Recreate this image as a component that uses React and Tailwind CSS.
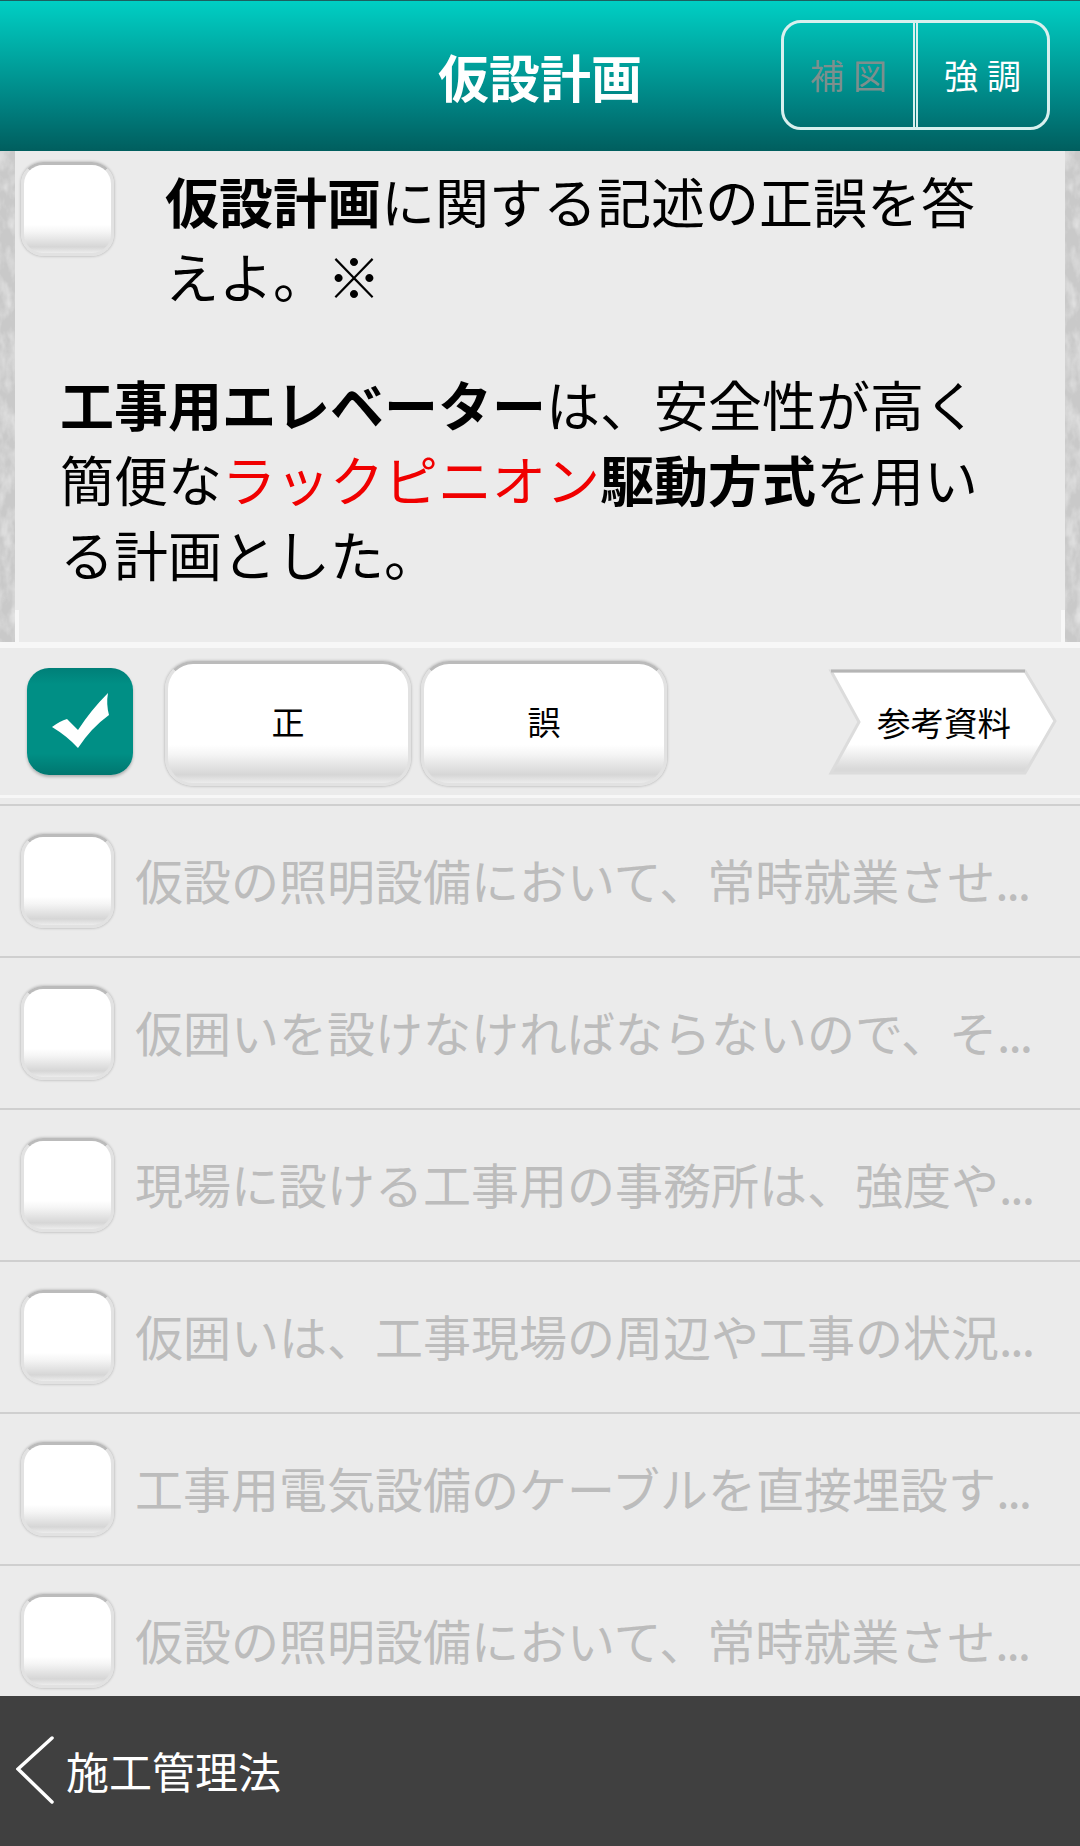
import React from 'react';

const rows = [
  '仮設の照明設備において、常時就業させ',
  '仮囲いを設けなければならないので、そ',
  '現場に設ける工事用の事務所は、強度や',
  '仮囲いは、工事現場の周辺や工事の状況',
  '工事用電気設備のケーブルを直接埋設す',
  '仮設の照明設備において、常時就業させ',
];

const raised = 'bg-[linear-gradient(#ffffff_0%,#ffffff_68%,#f5f5f5_76%,#d6d6d6_93%,#ececec_100%)] border-[3px] border-[#e2e2e2] border-t-[#bbbbbb] shadow-[0_0_3px_rgba(0,0,0,0.3)]';

const Checkbox = () => <div className={`w-[93px] h-[94px] shrink-0 rounded-[22px] ${raised}`} />;

// stone wall texture at the sides of the question
const Stone = ({ id }) => (
  <div className="w-[15px] shrink-0 bg-[#c9c9c9] overflow-hidden">
    <svg width="15" height="492" className="block">
      <filter id={id}>
        <feTurbulence type="fractalNoise" baseFrequency="0.09 0.05" numOctaves="3" seed="4" />
        <feColorMatrix values="0 0 0 0 1  0 0 0 0 1  0 0 0 0 1  1.6 0 0 0 -0.6" />
      </filter>
      <rect width="15" height="492" filter={`url(#${id})`} opacity="0.6" />
    </svg>
  </div>
);

export default function App() {
  return (
    <div className="w-[1080px] h-[1846px] flex flex-col overflow-hidden bg-[#ebebeb] text-black [font-family:'Noto_Sans_CJK_JP',sans-serif]">
      {/* header */}
      <header className="h-[151px] shrink-0 grid grid-cols-[1fr_auto_1fr] items-center border-t border-[#1d5f5f] bg-[linear-gradient(#00cfc4,#00a8a2_35%,#008080_70%,#005e5e)]">
        <div />
        <h1 className="text-[51px] leading-none font-bold text-white">仮設計画</h1>
        <div className="flex justify-end pr-[30px] pb-[3px]">
          <div className="flex w-[269px] h-[110px] rounded-[20px] border-[3px] border-[#d8f0ee] text-[34px] leading-none">
            <div className="w-[129px] flex items-center justify-center tracking-[9px] pl-[9px] text-[#7d8f8d]">補図</div>
            <div className="w-[5px] border-x-2 border-[#d8f0ee]" />
            <div className="flex-1 flex items-center justify-center tracking-[9px] pl-[9px] text-white">強調</div>
          </div>
        </div>
      </header>

      {/* question */}
      <section className="h-[491px] shrink-0 flex">
        <Stone id="stone-left" />
        <div className="relative flex-1 pt-[11px]">
          <div className="flex">
            <div className="ml-[6px]"><Checkbox /></div>
            <p className="ml-[51px] mt-[1px] w-[850px] text-[54px] leading-[75px]">
              <span className="font-bold">仮設計画</span>に関する記述の正誤を答えよ。※
            </p>
          </div>
          <p className="ml-[45px] mt-[53px] w-[950px] text-[54px] leading-[75px]">
            <span className="font-bold">工事用エレベーター</span>は、安全性が高く簡便な<span className="text-[#f00000]">ラックピニオン</span><span className="font-bold">駆動方式</span>を用いる計画とした。
          </p>
          <div className="absolute left-0 bottom-0 w-[4px] h-[32px] bg-[#f7f7f7]" />
          <div className="absolute right-0 bottom-0 w-[4px] h-[32px] bg-[#f7f7f7]" />
        </div>
        <Stone id="stone-right" />
      </section>

      {/* toolbar */}
      <section className="h-[163px] shrink-0 border-t-[6px] border-[#f7f7f7]">
        <div className="h-[150px] border-b-[3px] border-[#f7f7f7] flex items-center pl-[27px] pr-[25px]">
          <div className="w-[106px] h-[107px] shrink-0 rounded-[22px] bg-[linear-gradient(#007f78,#008f85_15%,#008f85_80%,#00766f)] shadow-[0_2px_3px_rgba(0,0,0,0.25)]">
            <svg viewBox="0 0 106 107" className="w-full h-full">
              <path d="M25 59 Q33 53 40 51 L51 62 Q64 42 81 25 Q79 36 82 47 Q64 60 51 80 Q40 68 25 59Z" fill="#fff" />
            </svg>
          </div>
          <button className={`ml-[32px] mt-[3px] w-[246px] h-[125px] rounded-[28px] text-[33px] pb-[2px] ${raised}`}>正</button>
          <button className={`ml-[10px] mt-[3px] w-[246px] h-[125px] rounded-[28px] text-[33px] pb-[2px] ${raised}`}>誤</button>
          <div className="relative ml-auto w-[225px] h-[104px]">
            <svg viewBox="0 0 225 104" className="absolute inset-0 w-full h-full overflow-visible">
              <defs>
                <linearGradient id="arrow-fill" x1="0" y1="0" x2="0" y2="1">
                  <stop offset="0.72" stopColor="#ffffff" />
                  <stop offset="0.96" stopColor="#d9d9d9" />
                </linearGradient>
              </defs>
              <path d="M1 1 L195 1 L225 51 L195 103 L1 103 L29 52Z" fill="url(#arrow-fill)" stroke="#dcdcdc" strokeWidth="3" />
              <path d="M1 1 L195 1" stroke="#b5b5b5" strokeWidth="3" />
            </svg>
            <span className="absolute left-[47px] top-[29px] text-[33.5px] leading-[46px] whitespace-nowrap">参考資料</span>
          </div>
        </div>
      </section>

      {/* other questions */}
      <div className="flex-1 overflow-hidden border-t-[2px] border-[#cfcfcf] -mt-[1px]">
        {rows.map((text, i) => (
          <div key={i} className="h-[152px] shrink-0 flex items-center pl-[21px] border-b-[2px] border-[#cfcfcf]">
            <Checkbox />
            <span className="ml-[21px] pb-[4px] text-[48px] leading-none whitespace-nowrap text-[#bcbcbc]">
              {text}<span className="tracking-[-2px]">...</span>
            </span>
          </div>
        ))}
      </div>

      {/* footer */}
      <footer className="h-[150px] shrink-0 bg-[#404040] flex items-center pl-[16px] pb-[2px] text-white">
        <svg width="38" height="68" viewBox="0 0 38 68" className="shrink-0" fill="none" stroke="#fff" strokeWidth="3.5" strokeLinecap="round">
          <path d="M36 2 L2 33 L36 66" />
        </svg>
        <span className="ml-[12px] text-[43px] leading-none">施工管理法</span>
      </footer>
    </div>
  );
}
